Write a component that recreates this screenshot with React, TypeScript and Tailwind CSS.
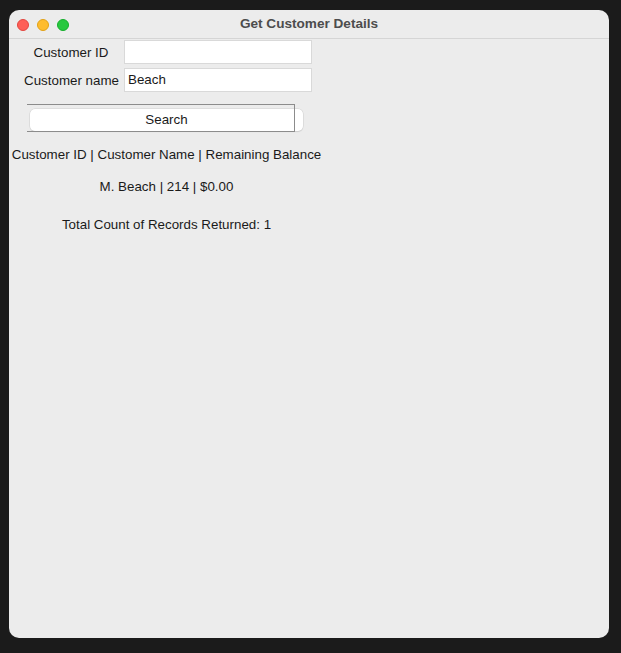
const App = () => {
  return (
    <div
      className="w-[621px] h-[653px] bg-[#1b1b1b] pt-[10px] pl-[9px]"
      style={{ fontFamily: '"Liberation Sans", Arial, sans-serif' }}
    >
      <div className="w-[600px] h-[628px] rounded-[10px] bg-[#ececec] overflow-hidden flex flex-col">
        {/* title bar */}
        <div className="h-[29px] border-b border-[#d5d5d5] flex items-center relative shrink-0">
          <div className="flex gap-[8px] pl-[8px] pt-[1px]">
            <span className="w-[12px] h-[12px] rounded-full bg-[#fe5f57] border border-[#e2463f]" />
            <span className="w-[12px] h-[12px] rounded-full bg-[#febc2e] border border-[#e1a116]" />
            <span className="w-[12px] h-[12px] rounded-full bg-[#28c840] border border-[#14ae2b]" />
          </div>
          <div className="absolute inset-0 flex items-center justify-center text-[13.6px] font-bold text-[#4d4d4d]">
            Get Customer Details
          </div>
        </div>

        {/* form */}
        <div className="pl-[3px] pt-[1px] w-[312px] flex flex-col text-[13.35px] text-[#1a1a1a] whitespace-nowrap">
          <div className="ml-[8px] grid grid-cols-[104px_188px] gap-y-[4px] items-center">
            <div className="text-center pr-[2px] pt-[2px]">Customer ID</div>
            <div className="h-[24px] bg-white border border-[#d9d9d9]" />
            <div className="text-right pr-[5px] pt-[2px]">Customer name</div>
            <div className="h-[24px] bg-white border border-[#d9d9d9] flex items-center px-[3px]">
              Beach
            </div>
          </div>

          <div className="relative mt-[12px] ml-[15px] w-[276px] h-[28px]">
            <div className="absolute left-[3px] top-[5px] w-[273px] h-[22px] rounded-[5px] bg-white shadow-[0_0_0_0.5px_#d0d0d0,0_1px_1px_rgba(0,0,0,0.12)] flex items-center justify-center">
              Search
            </div>
            <div className="absolute left-0 top-0 w-[268px] h-[28px] border border-l-0 border-[#8c8c8c]" />
          </div>

          <div className="mt-[13px] flex justify-center">
            <span>Customer ID | Customer Name | Remaining Balance</span>
          </div>
          <div className="mt-[12px] flex justify-center">
            <span>M. Beach | 214 | $0.00</span>
          </div>
          <div className="mt-[18px] flex justify-center">
            <span>Total Count of Records Returned: 1</span>
          </div>
        </div>
      </div>
    </div>
  );
};

export default App;
